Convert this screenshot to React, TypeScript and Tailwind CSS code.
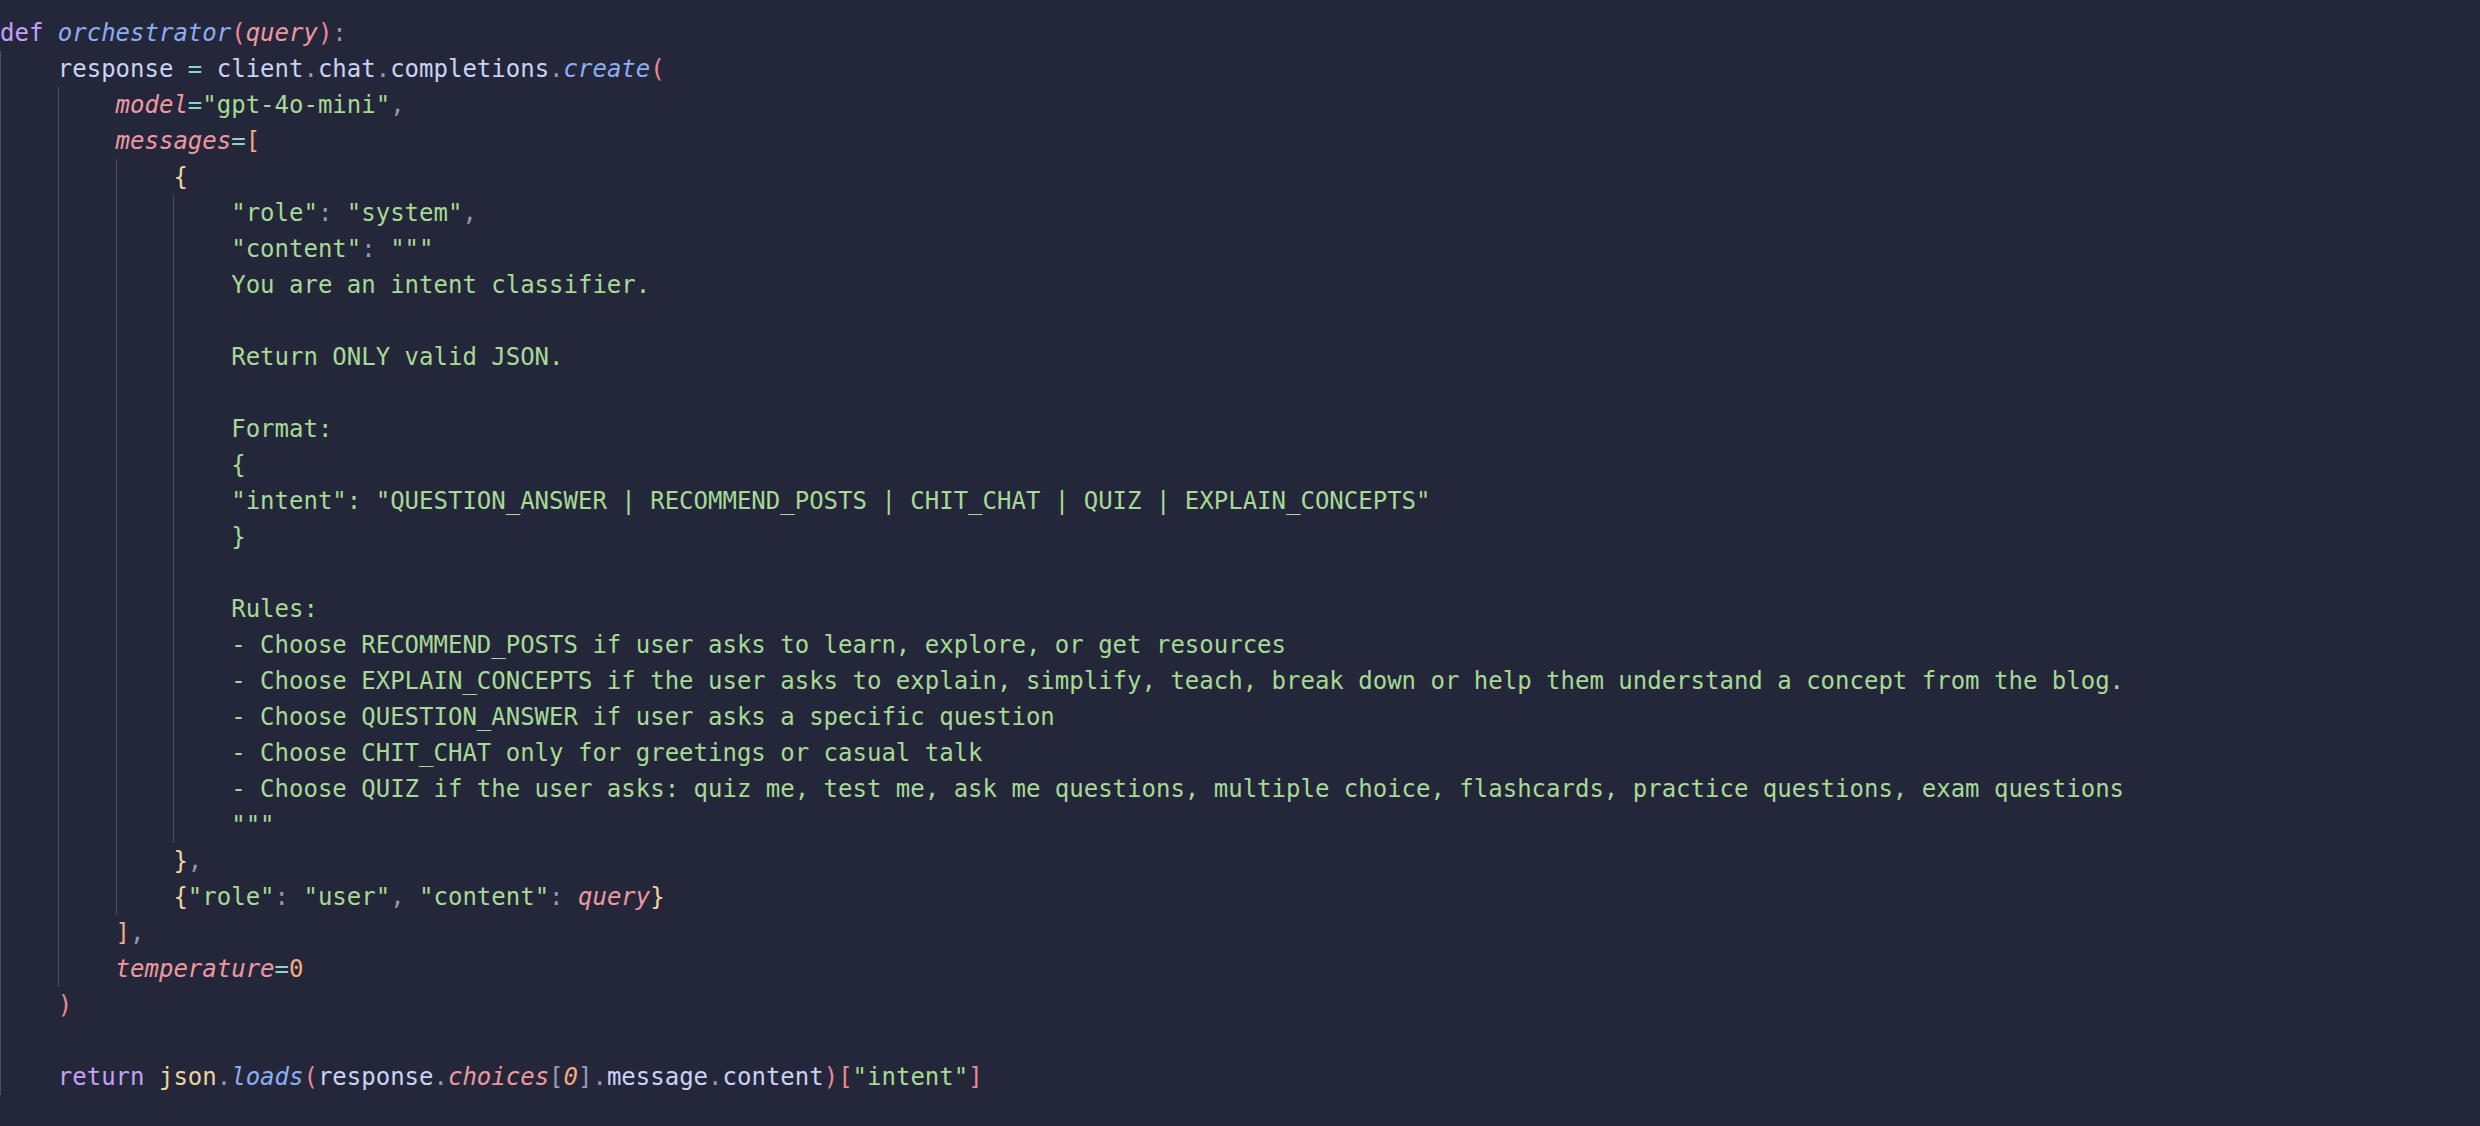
const kw = "text-[#c6a0f6]";
const fn = "text-[#8aadf4] italic";
const pa = "text-[#ed8796]";
const pm = "text-[#ee99a0] italic";
const tx = "text-[#cad3f5]";
const op = "text-[#8bd5ca]";
const pu = "text-[#939ab7]";
const st = "text-[#a6da95]";
const br = "text-[#f5a97f]";
const cb = "text-[#eed49f]";

type Tok = [string, string];
type Line = { g: number; toks: Tok[] };

const s = (text: string): Tok[] => [[st, text]];

const lines: Line[] = [
  { g: 0, toks: [[kw, "def"], [tx, " "], [fn, "orchestrator"], [pa, "("], [pm, "query"], [pa, ")"], [pu, ":"]] },
  {
    g: 1,
    toks: [
      [tx, "response "], [op, "="], [tx, " client"], [pu, "."], [tx, "chat"], [pu, "."],
      [tx, "completions"], [pu, "."], [fn, "create"], [pa, "("],
    ],
  },
  { g: 2, toks: [[pm, "model"], [op, "="], [st, '"gpt-4o-mini"'], [pu, ","]] },
  { g: 2, toks: [[pm, "messages"], [op, "="], [br, "["]] },
  { g: 3, toks: [[cb, "{"]] },
  { g: 4, toks: [[st, '"role"'], [pu, ": "], [st, '"system"'], [pu, ","]] },
  { g: 4, toks: [[st, '"content"'], [pu, ": "], [st, '"""']] },
  { g: 4, toks: s("You are an intent classifier.") },
  { g: 4, toks: [] },
  { g: 4, toks: s("Return ONLY valid JSON.") },
  { g: 4, toks: [] },
  { g: 4, toks: s("Format:") },
  { g: 4, toks: s("{") },
  { g: 4, toks: s('"intent": "QUESTION_ANSWER | RECOMMEND_POSTS | CHIT_CHAT | QUIZ | EXPLAIN_CONCEPTS"') },
  { g: 4, toks: s("}") },
  { g: 4, toks: [] },
  { g: 4, toks: s("Rules:") },
  { g: 4, toks: s("- Choose RECOMMEND_POSTS if user asks to learn, explore, or get resources") },
  { g: 4, toks: s("- Choose EXPLAIN_CONCEPTS if the user asks to explain, simplify, teach, break down or help them understand a concept from the blog.") },
  { g: 4, toks: s("- Choose QUESTION_ANSWER if user asks a specific question") },
  { g: 4, toks: s("- Choose CHIT_CHAT only for greetings or casual talk") },
  { g: 4, toks: s("- Choose QUIZ if the user asks: quiz me, test me, ask me questions, multiple choice, flashcards, practice questions, exam questions") },
  { g: 4, toks: s('"""') },
  { g: 3, toks: [[cb, "}"], [pu, ","]] },
  {
    g: 3,
    toks: [
      [cb, "{"], [st, '"role"'], [pu, ": "], [st, '"user"'], [pu, ", "], [st, '"content"'], [pu, ": "],
      [pm, "query"], [cb, "}"],
    ],
  },
  { g: 2, toks: [[br, "]"], [pu, ","]] },
  { g: 2, toks: [[pm, "temperature"], [op, "="], [br, "0"]] },
  { g: 1, toks: [[pa, ")"]] },
  { g: 1, toks: [] },
  {
    g: 1,
    toks: [
      [kw, "return"], [tx, " "], [cb, "json"], [pu, "."], [fn, "loads"], [pa, "("], [tx, "response"],
      [pu, "."], [pm, "choices"], [pu, "["], [br + " italic", "0"], [pu, "]"], [pu, "."], [tx, "message"],
      [pu, "."], [tx, "content"], [pa, ")"], [pa, "["], [st, '"intent"'], [pa, "]"],
    ],
  },
];

const CodeLine = ({ line }: { line: Line }) => (
  <div className="flex h-9">
    {Array.from({ length: line.g }).map((_, i) => (
      <span key={i} className="w-[4ch] shrink-0 border-l border-[#494d64]" />
    ))}
    <span className="whitespace-pre">
      {line.toks.map(([cls, text], i) => (
        <span key={i} className={cls}>
          {text}
        </span>
      ))}
    </span>
  </div>
);

export default function App() {
  return (
    <div className="min-h-screen w-full bg-[#24273a] pt-[15px] font-['DejaVu_Sans_Mono',monospace] text-[24px] leading-9 text-[#cad3f5]">
      {lines.map((line, i) => (
        <CodeLine key={i} line={line} />
      ))}
    </div>
  );
}
